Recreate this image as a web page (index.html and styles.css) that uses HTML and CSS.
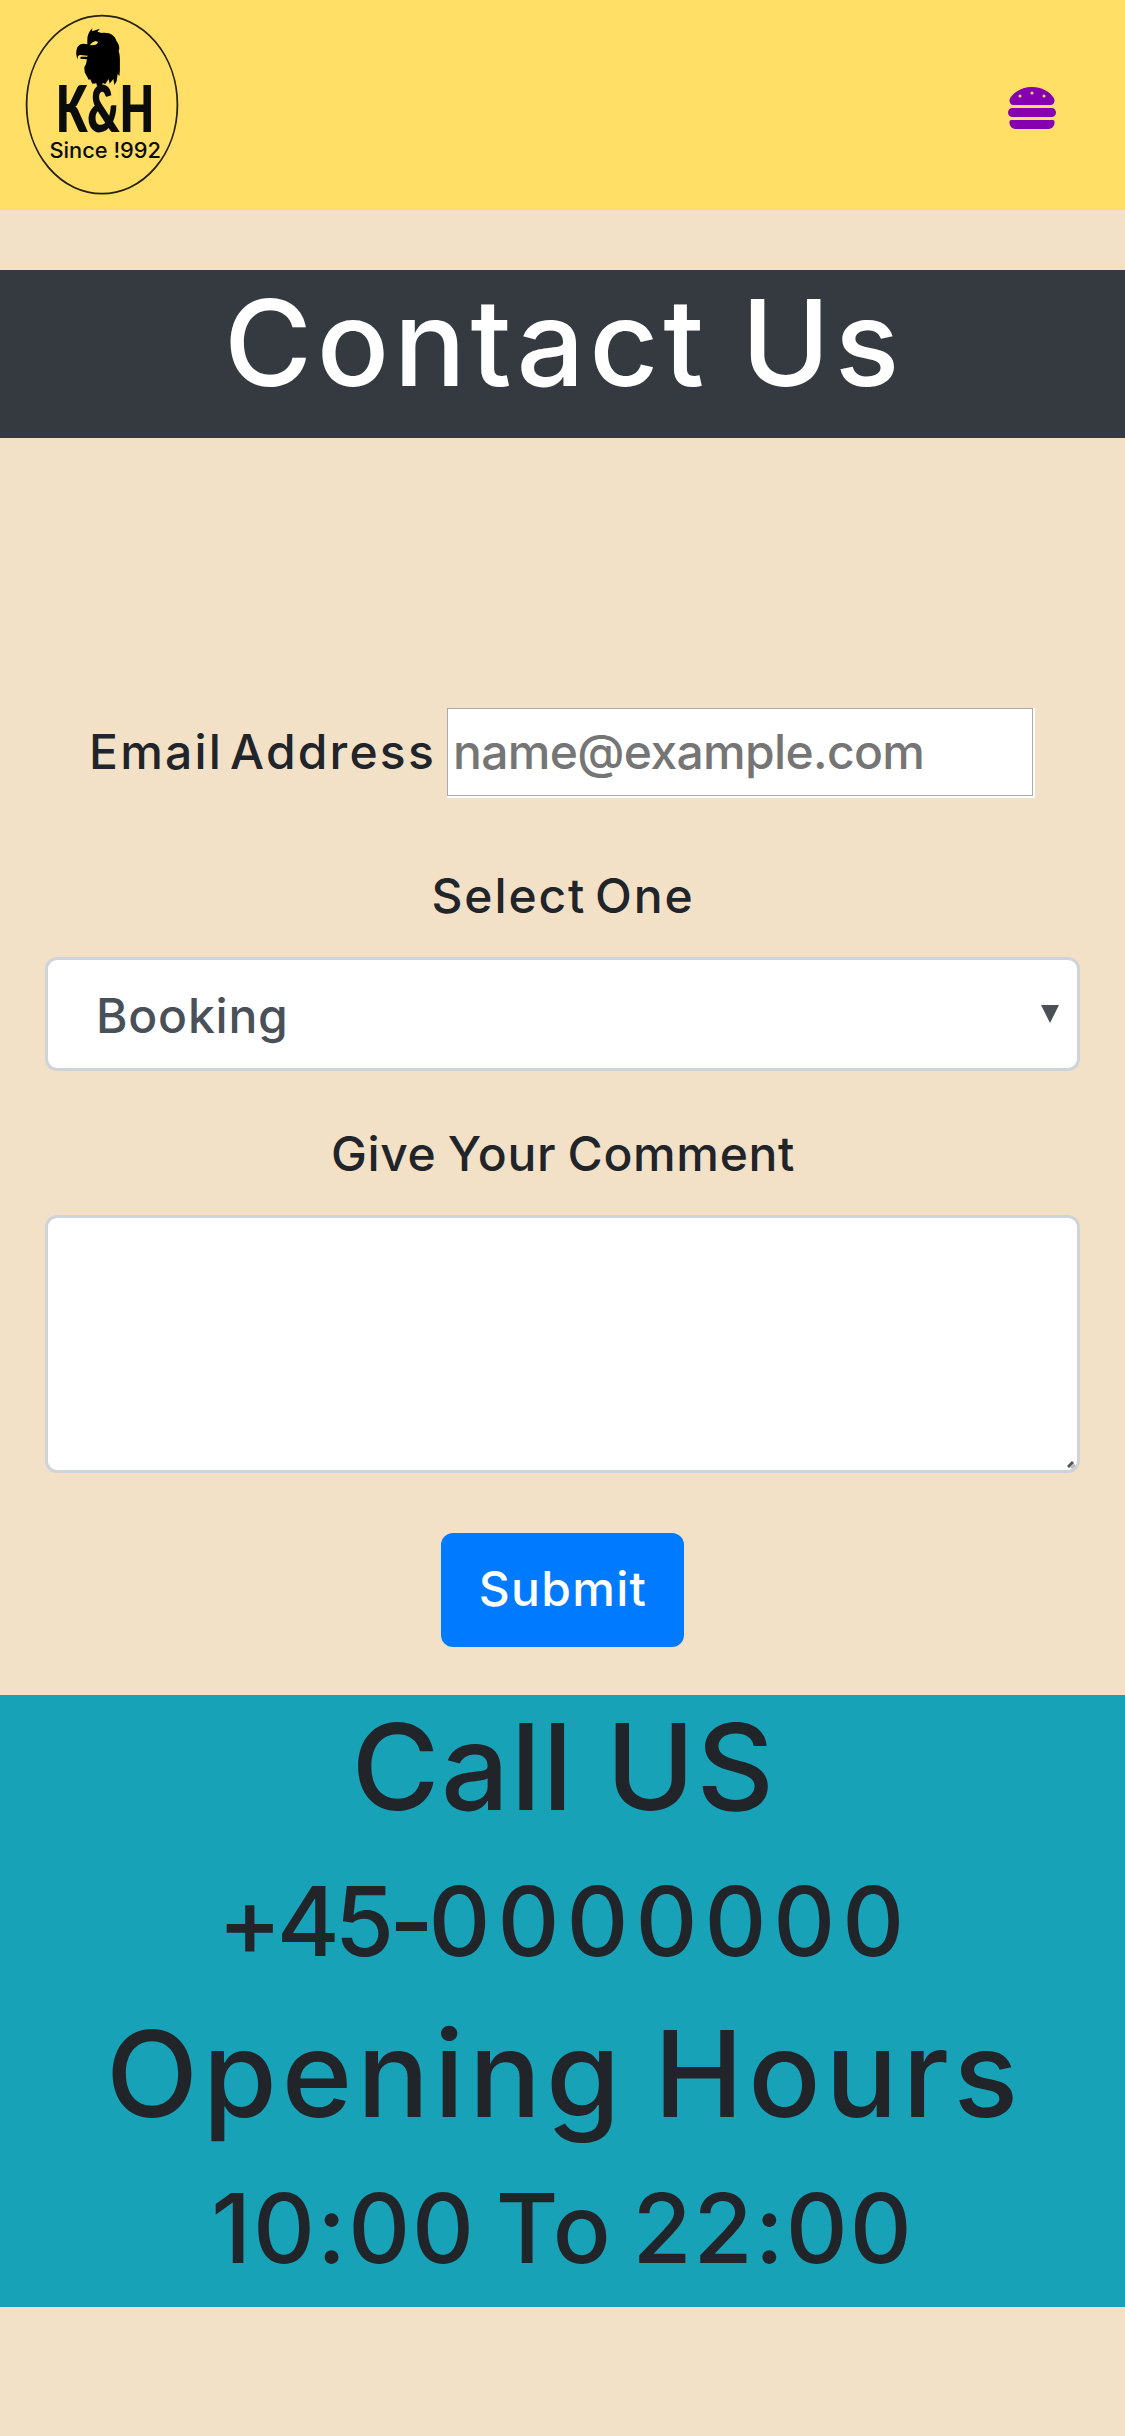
FILE: index.html
```html
<!DOCTYPE html>
<html lang="en">
<head>
<meta charset="utf-8">
<title>Contact Us</title>
<link rel="stylesheet" href="styles.css">
</head>
<body>
<header class="navbar">
  <svg class="logo" viewBox="0 0 156 184" role="img" aria-label="K&amp;H Since 1992">
    <ellipse cx="78" cy="91.7" rx="75.4" ry="89" fill="none" stroke="#25200f" stroke-width="1.8"/>
    <g transform="translate(-4 -3) scale(.3333)">
      <path fill="#000" d="M202 93 C201 77 206 66 217 55 L216 64 L240 56 L232 65 L245 69 C270 66 285 77 289 92 C298 103 300 114 296 124 C302 140 299 162 300 178 L298 199 L293 191 L290 214 L283 225 L280 207 L269 221 L266 207 L256 222 L249 219 L240 234 L231 228 L229 220 L217 221 L210 206 L207 211 L194 187 L193 172 L198 162 L201 148 L181 146 L182 140 L202 140 L203 137 L181 135 C172 136 173 143 174 149 C167 138 167 120 174 109 C181 100 192 100 202 103Z"/>
      <path fill="#ffdf65" d="M209 106 Q216 96 226 93 L234 95 Q233 104 222 105Z"/>
    </g>
    <text class="logo-name" x="32" y="119" textLength="98" lengthAdjust="spacingAndGlyphs">K&amp;H</text>
    <text class="logo-since" x="25.5" y="145" textLength="111.5" lengthAdjust="spacingAndGlyphs">Since !992</text>
  </svg>
  <svg class="burger" viewBox="0 0 512 512" role="img" aria-label="Menu"><path fill="#8500ae" d="M464 256H48a48 48 0 0 0 0 96h416a48 48 0 0 0 0-96zm16 128H32a16 16 0 0 0-16 16v16a64 64 0 0 0 64 64h352a64 64 0 0 0 64-64v-16a16 16 0 0 0-16-16zM58.64 224h394.72c34.57 0 54.62-43.9 34.82-75.88C448 83.2 359.55 32.1 256 32c-103.54.1-192 51.2-232.18 116.11C4 180.09 24.07 224 58.64 224zM384 112a16 16 0 1 1-16 16 16 16 0 0 1 16-16zM256 80a16 16 0 1 1-16 16 16 16 0 0 1 16-16zm-128 32a16 16 0 1 1-16 16 16 16 0 0 1 16-16z"/></svg>
</header>
<h1 class="title">Contact Us</h1>
<form class="form">
  <div class="email-row">
    <label class="label-email" for="email">Email Address</label>
    <input class="email" id="email" type="email" placeholder="name@example.com">
  </div>
  <div class="label label-select">Select One</div>
  <div class="select">
    <span class="choice">Booking</span>
    <svg class="arrow" viewBox="0 0 18 18"><path fill="#495057" d="M0 0H18L9 18Z"/></svg>
  </div>
  <label class="label label-comment" for="comment">Give Your Comment</label>
  <div class="comment-wrap">
    <textarea class="comment" id="comment"></textarea>
    <svg class="grip" viewBox="0 0 9 9"><path d="M1 7 6 2" stroke="#555" stroke-width="3"/><path d="M4 8 8 5" stroke="#bbb" stroke-width="3"/></svg>
  </div>
  <button class="submit" type="button">Submit</button>
</form>
<footer class="info">
  <h1 class="call">Call US</h1>
  <h2 class="phone"><span class="prefix">+45-</span>0000000</h2>
  <h1 class="opening">Opening Hours</h1>
  <h2 class="hours">10:00 To 22:00</h2>
</footer>
</body>
</html>
```
FILE: styles.css
```css
* { box-sizing: border-box; }
body {
  margin: 0;
  background: #f3e1c7;
  color: #212529;
  font-family: Inter, sans-serif;
  font-size: 48px;
  font-weight: 500;
  line-height: 72px;
}
h1, h2 { margin: 0; font-weight: 500; text-align: center; white-space: nowrap; }
h1 { font-size: 120px; line-height: 144px; }
h2 { font-size: 96px; line-height: 115px; }

.navbar {
  height: 210px;
  padding: 13px 69px 0 24px;
  background: #ffdf65;
  display: flex;
  justify-content: space-between;
  align-items: flex-start;
}
.logo { width: 156px; height: 184px; overflow: visible; }
.logo-name { font: 800 65px Lato, sans-serif; fill: #0b0d0d; }
.logo-since { font: 500 21px Inter, sans-serif; fill: #0b0d0d; }
.burger { width: 48px; height: 48px; margin-top: 71px; }

.title {
  height: 168px;
  margin-top: 60px;
  background: #343a40;
  color: #fff;
  line-height: 146px;
  letter-spacing: 4.6px;
  word-spacing: -4px;
  text-indent: 3px;
}

.form {
  height: 1257px;
  padding: 270px 45px 0;
  display: flex;
  flex-direction: column;
}
.email-row { height: 90px; padding-left: 44px; display: flex; }
.label-email {
  width: 358px;
  line-height: 88px;
  letter-spacing: 2.2px;
  word-spacing: -8px;
  white-space: nowrap;
}
.email {
  width: 586px;
  height: 88px;
  padding: 0 0 2px 5px;
  border: 1px solid #a9a9a9;
  border-radius: 0;
  background: #fff;
  box-shadow: 2px 2px #fff, 0 2px #fff, 2px 0 #fff;
  font: inherit;
  letter-spacing: -0.65px;
}
.email::placeholder { color: #757575; }
.label { text-align: center; height: 72px; }
.label-select { margin-top: 62px; letter-spacing: 1.9px; word-spacing: -6px; text-indent: 1px; }
.select {
  height: 114px;
  margin-top: 25px;
  padding: 0 18px 0 48px;
  border: 3px solid #ced4da;
  border-radius: 12px;
  background: #fff;
  color: #495057;
  display: flex;
  align-items: center;
  justify-content: space-between;
  letter-spacing: 0.8px;
}
.choice { padding-top: 4px; }
.arrow { width: 18px; height: 18px; }
.label-comment { margin-top: 47px; letter-spacing: 0.65px; word-spacing: -2px; text-indent: 1px; }
.comment-wrap { position: relative; height: 258px; margin-top: 25px; }
.comment {
  display: block;
  width: 100%;
  height: 258px;
  border: 3px solid #ced4da;
  border-radius: 12px;
  background: #fff;
  resize: none;
}
.grip { position: absolute; right: 4px; bottom: 4px; width: 9px; height: 9px; }
.submit {
  width: 243px;
  height: 114px;
  margin: 60px auto 0 396px;
  padding: 0 0 2px;
  border: 0;
  border-radius: 12px;
  background: #007bff;
  color: #fff;
  font: inherit;
  letter-spacing: 1.3px;
  text-indent: 1px;
}

.info { height: 612px; background: #17a2b8; }
.call { line-height: 144px; height: 168px; letter-spacing: 1.6px; word-spacing: -2px; text-indent: 2px; }
.phone { line-height: 117px; height: 139px; letter-spacing: 7px; text-indent: 4px; }
.prefix { letter-spacing: -5px; }
.opening { line-height: 144px; height: 168px; letter-spacing: 4.8px; word-spacing: -8px; text-indent: 4px; }
.hours { line-height: 117px; letter-spacing: 2px; word-spacing: -8px; text-indent: 0; }
```
